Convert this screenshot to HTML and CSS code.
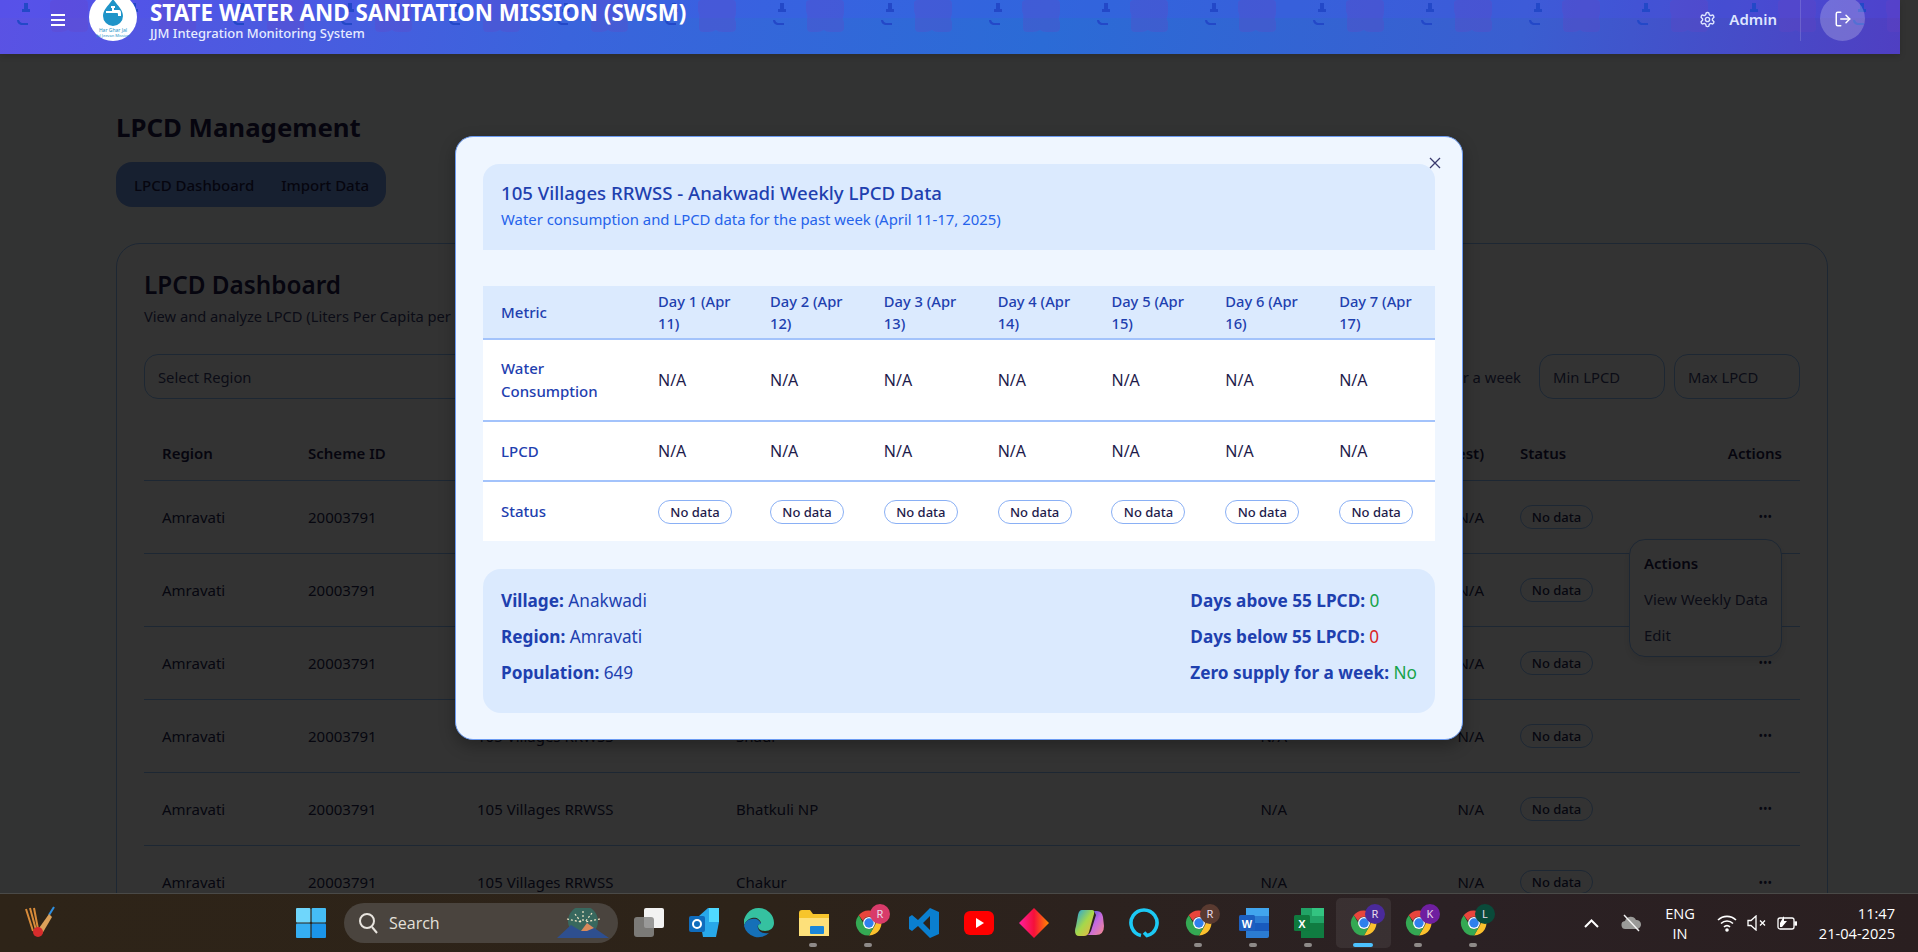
FILE: index.html
```html
<!DOCTYPE html>
<html lang="en">
<head>
    <meta charset="UTF-8">
    <meta name="viewport" content="width=device-width, initial-scale=1.0">
    <title>LPCD Management</title>
    <link rel="stylesheet" href="styles.css">
</head>
<body>
    <svg class="iconDefs" width="0" height="0">
        <symbol id="chrome" viewBox="0 0 48 48">
            <path d="M24 4a20 20 0 0 1 17.3 10H24a10 10 0 0 0-9.4 6.6L7.6 11.5A20 20 0 0 1 24 4z" fill="#e8453c"/>
            <path d="M41.3 14A20 20 0 0 1 24 44l8.6-15A10 10 0 0 0 32 16.5z" fill="#fbc02d"/>
            <path d="M24 44A20 20 0 0 1 7.6 11.5L16 26a10 10 0 0 0 11 7.6l5.6-4.6z" fill="#34a853"/>
            <circle cx="24" cy="24" r="9.5" fill="#fff"/>
            <circle cx="24" cy="24" r="7.5" fill="#2f80ed"/>
        </symbol>
    </svg>

    <div class="viewport">
        <div class="page">
            <header class="topbar">
                <svg class="topbarPattern" width="100%" height="54">
                    <defs>
                        <pattern id="tile" width="108" height="54" patternUnits="userSpaceOnUse">
                            <path d="M54 0h31q3 0 3 4v8q0 3-1 5t1 5v6q0 4-5 4h-9q-4 0-6-2-3 2-7 2h-6q-4 0-4-4v-9q1-3 0-5t-1-5V3q0-3 4-3z" fill="#6a3fc0" fill-opacity=".25"/>
                            <path d="M24 3h4v6h2v3h-8V9h2z" fill="#2348c8"/>
                            <path d="M19 20q1 3 3 3h6v2h-7q-4-1-4-5z" fill="#2348c8"/>
                        </pattern>
                    </defs>
                    <rect width="100%" height="54" fill="url(#tile)"/>
                </svg>
                <button class="menuBtn" aria-label="Menu">
                    <span></span><span></span><span></span>
                </button>
                <div class="logo">
                    <svg width="30" height="28" viewBox="0 0 30 28">
                        <path d="M15 0c5 7 10 11 10 17a10 10 0 0 1-20 0C5 11 10 7 15 0z" fill="#1f94c8"/>
                        <path d="M13 7h4v2h-1v2h5q2 0 2 3v3h-3v-2q0-1-1-1H8v-2h6V9h-1z" fill="#fff"/>
                    </svg>
                    <span class="logoText">Har Ghar Jal</span>
                    <span class="logoText small">Jal Jeevan Mission</span>
                </div>
                <div class="brand">
                    <div class="brandTitle">STATE WATER AND SANITATION MISSION (SWSM)</div>
                    <div class="brandSub">JJM Integration Monitoring System</div>
                </div>
                <div class="userBox">
                    <svg width="17" height="17" viewBox="0 0 24 24" fill="none" stroke="currentColor" stroke-width="2" stroke-linecap="round" stroke-linejoin="round">
                        <path d="M12.22 2h-.44a2 2 0 0 0-2 2v.18a2 2 0 0 1-1 1.73l-.43.25a2 2 0 0 1-2 0l-.15-.08a2 2 0 0 0-2.73.73l-.22.38a2 2 0 0 0 .73 2.73l.15.1a2 2 0 0 1 1 1.72v.51a2 2 0 0 1-1 1.74l-.15.09a2 2 0 0 0-.73 2.73l.22.38a2 2 0 0 0 2.73.73l.15-.08a2 2 0 0 1 2 0l.43.25a2 2 0 0 1 1 1.73V20a2 2 0 0 0 2 2h.44a2 2 0 0 0 2-2v-.18a2 2 0 0 1 1-1.73l.43-.25a2 2 0 0 1 2 0l.15.08a2 2 0 0 0 2.73-.73l.22-.39a2 2 0 0 0-.73-2.73l-.15-.08a2 2 0 0 1-1-1.74v-.5a2 2 0 0 1 1-1.74l.15-.09a2 2 0 0 0 .73-2.73l-.22-.38a2 2 0 0 0-2.73-.73l-.15.08a2 2 0 0 1-2 0l-.43-.25a2 2 0 0 1-1-1.73V4a2 2 0 0 0-2-2z"/>
                        <circle cx="12" cy="12" r="3"/>
                    </svg>
                    <span class="userName">Admin</span>
                </div>
                <div class="logoutWrap">
                    <button class="logoutBtn" aria-label="Logout">
                        <svg width="18" height="18" viewBox="0 0 24 24" fill="none" stroke="currentColor" stroke-width="2" stroke-linecap="round" stroke-linejoin="round">
                            <path d="M9 21H5a2 2 0 0 1-2-2V5a2 2 0 0 1 2-2h4"/>
                            <path d="M16 17l5-5-5-5"/>
                            <path d="M21 12H9"/>
                        </svg>
                    </button>
                </div>
            </header>

            <main class="mainContent">
                <h1 class="pageTitle">LPCD Management</h1>
                <div class="tabs">
                    <span class="tab">LPCD Dashboard</span>
                    <span class="tab">Import Data</span>
                </div>

                <section class="card">
                    <h2 class="cardTitle">LPCD Dashboard</h2>
                    <p class="cardSub">View and analyze LPCD (Liters Per Capita per Day) data across regions and schemes</p>

                    <div class="filters">
                        <div class="filterBox grow">Select Region</div>
                        <div class="filterCheck">Zero supply for a week</div>
                        <div class="filterBox small">Min LPCD</div>
                        <div class="filterBox small">Max LPCD</div>
                    </div>

                    <table class="dataTable">
                        <thead>
                            <tr>
                                <th class="colRegion">Region</th>
                                <th class="colScheme">Scheme ID</th>
                                <th class="colName">Scheme Name</th>
                                <th class="colVillage">Village</th>
                                <th class="colWater numeric">Water</th>
                                <th class="colLpcd numeric">LPCD (Latest)</th>
                                <th class="colStatus">Status</th>
                                <th class="colActions">Actions</th>
                            </tr>
                        </thead>
                        <tbody>
                            <tr><td>Amravati</td><td>20003791</td><td>105 Villages RRWSS</td><td>Anakwadi</td><td class="numeric">N/A</td><td class="numeric">N/A</td><td><span class="pill">No data</span></td><td class="dots">•••</td></tr>
                            <tr><td>Amravati</td><td>20003791</td><td>105 Villages RRWSS</td><td>Anjangaon Bari</td><td class="numeric">N/A</td><td class="numeric">N/A</td><td><span class="pill">No data</span></td><td class="dots">•••</td></tr>
                            <tr><td>Amravati</td><td>20003791</td><td>105 Villages RRWSS</td><td>Babhali</td><td class="numeric">N/A</td><td class="numeric">N/A</td><td><span class="pill">No data</span></td><td class="dots">•••</td></tr>
                            <tr><td>Amravati</td><td>20003791</td><td>105 Villages RRWSS</td><td>Shaur</td><td class="numeric">N/A</td><td class="numeric">N/A</td><td><span class="pill">No data</span></td><td class="dots">•••</td></tr>
                            <tr><td>Amravati</td><td>20003791</td><td>105 Villages RRWSS</td><td>Bhatkuli NP</td><td class="numeric">N/A</td><td class="numeric">N/A</td><td><span class="pill">No data</span></td><td class="dots">•••</td></tr>
                            <tr><td>Amravati</td><td>20003791</td><td>105 Villages RRWSS</td><td>Chakur</td><td class="numeric">N/A</td><td class="numeric">N/A</td><td><span class="pill">No data</span></td><td class="dots">•••</td></tr>
                        </tbody>
                    </table>

                    <div class="actionMenu">
                        <div class="actionHead">Actions</div>
                        <div class="actionItem">View Weekly Data</div>
                        <div class="actionItem">Edit</div>
                    </div>
                </section>
            </main>
        </div>
        <div class="scrollTrack"></div>

        <div class="overlay">
            <div class="modal">
                <button class="closeBtn" aria-label="Close">
                    <svg width="12" height="12" viewBox="0 0 12 12" fill="none" stroke="currentColor" stroke-width="1.3">
                        <path d="M1 1l10 10M11 1L1 11"/>
                    </svg>
                </button>
                <div class="modalHead">
                    <h3>105 Villages RRWSS - Anakwadi Weekly LPCD Data</h3>
                    <p>Water consumption and LPCD data for the past week (April 11-17, 2025)</p>
                </div>

                <table class="weekTable">
                    <thead>
                        <tr>
                            <th class="metric">Metric</th>
                            <th class="dayFirst">Day 1 (Apr 11)</th>
                            <th>Day 2 (Apr 12)</th>
                            <th>Day 3 (Apr 13)</th>
                            <th>Day 4 (Apr 14)</th>
                            <th>Day 5 (Apr 15)</th>
                            <th>Day 6 (Apr 16)</th>
                            <th>Day 7 (Apr 17)</th>
                        </tr>
                    </thead>
                    <tbody>
                        <tr class="rowWater">
                            <td class="metric">Water Consumption</td>
                            <td>N/A</td><td>N/A</td><td>N/A</td><td>N/A</td><td>N/A</td><td>N/A</td><td>N/A</td>
                        </tr>
                        <tr class="rowLpcd">
                            <td class="metric">LPCD</td>
                            <td>N/A</td><td>N/A</td><td>N/A</td><td>N/A</td><td>N/A</td><td>N/A</td><td>N/A</td>
                        </tr>
                        <tr class="rowStatus">
                            <td class="metric">Status</td>
                            <td><span class="badge">No data</span></td>
                            <td><span class="badge">No data</span></td>
                            <td><span class="badge">No data</span></td>
                            <td><span class="badge">No data</span></td>
                            <td><span class="badge">No data</span></td>
                            <td><span class="badge">No data</span></td>
                            <td><span class="badge">No data</span></td>
                        </tr>
                    </tbody>
                </table>

                <div class="summary">
                    <div class="summaryCol">
                        <div><b>Village:</b> Anakwadi</div>
                        <div><b>Region:</b> Amravati</div>
                        <div><b>Population:</b> 649</div>
                    </div>
                    <div class="summaryCol">
                        <div><b>Days above 55 LPCD:</b> <span class="good">0</span></div>
                        <div><b>Days below 55 LPCD:</b> <span class="bad">0</span></div>
                        <div><b>Zero supply for a week:</b> <span class="good">No</span></div>
                    </div>
                </div>
            </div>
        </div>
    </div>

    <footer class="taskbar">
        <svg class="cricket" width="32" height="34" viewBox="0 0 32 34" fill="none">
            <path d="M2 3l7 22M6 2l6 22M10 2l4 21" stroke="#d88b3a" stroke-width="2"/>
            <path d="M30 1l-5 8" stroke="#2f8fe0" stroke-width="2"/>
            <path d="M25 8l3 3-10 17-5-3z" fill="#dca15a"/>
            <circle cx="14" cy="26" r="5" fill="#d62c2c"/>
        </svg>

        <svg class="winLogo" width="30" height="30" viewBox="0 0 30 30">
            <rect x="0" y="0" width="14.4" height="14.4" rx="1" fill="#6fd6fb"/>
            <rect x="15.6" y="0" width="14.4" height="14.4" rx="1" fill="#45bdf5"/>
            <rect x="0" y="15.6" width="14.4" height="14.4" rx="1" fill="#35aef2"/>
            <rect x="15.6" y="15.6" width="14.4" height="14.4" rx="1" fill="#1b95ea"/>
        </svg>

        <div class="searchBox">
            <svg width="20" height="22" viewBox="0 0 20 22" fill="none" stroke="#e8e4de" stroke-width="2">
                <circle cx="9" cy="9" r="7"/>
                <path d="M14 15l5 6"/>
            </svg>
            <span>Search</span>
            <svg class="searchArt" width="52" height="30" viewBox="0 0 52 30">
                <circle cx="26" cy="13" r="15" fill="#38685e"/>
                <path d="M26 3v10M18 6l6 8M35 5l-7 9M10 11l14 3M43 11l-15 3" stroke="#f4e8c8" stroke-width="1.2" stroke-dasharray="2 2"/>
                <path d="M0 30l14-13 10 6 6-8 22 15z" fill="#2e4f8f"/>
                <path d="M24 23l6-8 7 5-7 3z" fill="#d98a5a"/>
            </svg>
        </div>

        <div class="appList">
            <div class="app">
                <svg width="30" height="30" viewBox="0 0 30 30">
                    <rect x="10" y="0" width="20" height="20" rx="2" fill="#f2f2f2"/>
                    <rect x="0" y="9" width="20" height="20" rx="3" fill="#8a8a88" fill-opacity=".85"/>
                </svg>
            </div>
            <div class="app">
                <svg width="30" height="30" viewBox="0 0 30 30">
                    <path d="M10 8l9-8h11v14l-3 15H14z" fill="#28a8ea"/>
                    <path d="M20 0h10v14H20z" fill="#50d9ff"/>
                    <rect x="0" y="8" width="16" height="16" rx="2" fill="#0f6cbd"/>
                    <circle cx="8" cy="16" r="4" fill="none" stroke="#fff" stroke-width="2"/>
                </svg>
            </div>
            <div class="app">
                <svg width="30" height="30" viewBox="0 0 30 30">
                    <path d="M15 0a15 15 0 0 1 15 15c0 5-4 8-9 8-4 0-7-2-7-5 0-2 2-3 3-3-1-4-5-6-9-5C4 11 1 14 0 18A15 15 0 0 1 15 0z" fill="#35c1a0"/>
                    <path d="M0 18c1-4 4-7 8-7 4-1 8 1 9 5-2 0-4 1-3 4 1 5 7 6 11 5a15 15 0 0 1-25-7z" fill="#1570b8"/>
                </svg>
            </div>
            <div class="app hasDot">
                <svg width="30" height="26" viewBox="0 0 30 26">
                    <path d="M0 3q0-3 3-3h8l3 4h16v22H0z" fill="#f7c52c"/>
                    <path d="M0 8h30v18H0z" fill="#fde07a"/>
                    <rect x="11" y="16" width="14" height="8" rx="1" fill="#1a86d9"/>
                </svg>
            </div>
            <div class="app hasDot">
                <svg width="30" height="30"><use href="#chrome"/></svg>
                <span class="profile rose">R</span>
            </div>
            <div class="app">
                <svg width="30" height="30" viewBox="0 0 30 30">
                    <path d="M21 0l9 4v22l-9 4L9 18l-6 5-3-2v-12l3-2 6 5zM21 8l-7 7 7 7z" fill="#0a7fd0"/>
                </svg>
            </div>
            <div class="app">
                <svg width="30" height="24" viewBox="0 0 30 24">
                    <rect width="30" height="24" rx="6" fill="#f00"/>
                    <path d="M12 7l8 5-8 5z" fill="#fff"/>
                </svg>
            </div>
            <div class="app">
                <svg width="30" height="30" viewBox="0 0 30 30">
                    <defs>
                        <linearGradient id="kite" x1="0" x2="1">
                            <stop offset="0" stop-color="#ff1f9f"/>
                            <stop offset=".5" stop-color="#f5103a"/>
                            <stop offset="1" stop-color="#ff8a00"/>
                        </linearGradient>
                    </defs>
                    <path d="M15 0l15 15-15 15L0 15z" fill="url(#kite)"/>
                </svg>
            </div>
            <div class="app">
                <svg width="30" height="30" viewBox="0 0 30 30">
                    <defs>
                        <linearGradient id="copilotA" x1="0" y1="0" x2="1" y2="1">
                            <stop offset="0" stop-color="#1aa0e8"/>
                            <stop offset=".5" stop-color="#a6d84a"/>
                            <stop offset="1" stop-color="#f5b042"/>
                        </linearGradient>
                        <linearGradient id="copilotB" x1="0" y1="0" x2="1" y2="1">
                            <stop offset="0" stop-color="#2b50d8"/>
                            <stop offset=".5" stop-color="#c46ae0"/>
                            <stop offset="1" stop-color="#f58a8a"/>
                        </linearGradient>
                    </defs>
                    <path d="M8 2h10q3 0 2 4l-5 18q-1 4-5 4H5q-4 0-4-5q0-2 1-5l2-11q1-5 4-5z" fill="url(#copilotA)"/>
                    <path d="M20 3h3q5 0 6 6l1 9q0 9-8 9h-9q3-1 4-4l5-16z" fill="url(#copilotB)"/>
                </svg>
            </div>
            <div class="app">
                <svg width="30" height="30" viewBox="0 0 30 30" fill="none">
                    <path d="M12 27.600a13 13 0 1 1 6 0l-3-3" stroke="#1cc9f5" stroke-width="3.600"/>
                </svg>
            </div>
            <div class="app hasDot">
                <svg width="30" height="30"><use href="#chrome"/></svg>
                <span class="profile brown">R</span>
            </div>
            <div class="app hasDot">
                <svg width="30" height="30" viewBox="0 0 30 30">
                    <path d="M7 0h21q2 0 2 2v26q0 2-2 2H7z" fill="#2b7cd3"/>
                    <path d="M7 0h23v8H7z" fill="#41a5ee"/>
                    <path d="M7 15h23v8H7z" fill="#185abd"/>
                    <rect x="0" y="7" width="16" height="16" rx="1.5" fill="#1c5fc0"/>
                    <text class="officeLetter" x="8" y="20">W</text>
                </svg>
            </div>
            <div class="app hasDot">
                <svg width="30" height="30" viewBox="0 0 30 30">
                    <path d="M7 0h21q2 0 2 2v26q0 2-2 2H7z" fill="#21a366"/>
                    <path d="M18 0h12v8H18z" fill="#33c481"/>
                    <path d="M7 15h23v15H7z" fill="#107c41"/>
                    <rect x="0" y="7" width="16" height="16" rx="1.5" fill="#0f7a3e"/>
                    <text class="officeLetter" x="8" y="20">X</text>
                </svg>
            </div>
            <div class="app active hasDot">
                <svg width="30" height="30"><use href="#chrome"/></svg>
                <span class="profile violet">R</span>
            </div>
            <div class="app hasDot">
                <svg width="30" height="30"><use href="#chrome"/></svg>
                <span class="profile purple">K</span>
            </div>
            <div class="app hasDot">
                <svg width="30" height="30"><use href="#chrome"/></svg>
                <span class="profile green">L</span>
            </div>
        </div>

        <div class="tray">
            <svg class="trayChevron" width="15" height="9" viewBox="0 0 15 9" fill="none" stroke="#fff" stroke-width="2">
                <path d="M1 8l6.500-6.500L14 8"/>
            </svg>
            <svg class="trayCloud" width="21" height="18" viewBox="0 0 21 18">
                <path d="M5 15a4 4 0 0 1-1-8 6 6 0 0 1 11-1 4.500 4.500 0 0 1 1 9z" fill="#9a9a98"/>
                <path d="M3 1l15 16" stroke="#f2f2f2" stroke-width="1.4"/>
            </svg>
            <div class="trayLang">ENG<br>IN</div>
            <svg class="trayIcon" width="20" height="18" viewBox="0 0 20 18" fill="none" stroke="#fff" stroke-width="1.600">
                <path d="M1 6a13 13 0 0 1 18 0M4 9.500a8.500 8.500 0 0 1 12 0M7 13a4 4 0 0 1 6 0"/>
                <circle cx="10" cy="16" r="1" fill="#fff"/>
            </svg>
            <svg class="trayIcon" width="20" height="16" viewBox="0 0 20 16" fill="none" stroke="#fff" stroke-width="1.300">
                <path d="M1 5.500h3L9 1v14l-5-4.500H1z"/>
                <path d="M13 5.500l5 5M18 5.500l-5 5"/>
            </svg>
            <svg class="trayIcon" width="20" height="16" viewBox="0 0 20 16" fill="none" stroke="#fff" stroke-width="1.300">
                <rect x="1" y="3" width="16" height="11" rx="2"/>
                <rect x="18" y="7" width="1.500" height="3" fill="#fff"/>
                <path d="M3 12V8l4-7v5h3l-5 6z" fill="#fff" stroke="none"/>
            </svg>
            <div class="trayClock">11:47<br>21-04-2025</div>
        </div>
    </footer>
</body>
</html>
```

FILE: styles.css
```css
* {
    box-sizing: border-box;
}
body {
    margin: 0;
    height: 952px;
    display: flex;
    flex-direction: column;
    overflow: hidden;
    font-family: "Noto Sans", "Open Sans", Arial, sans-serif;
    font-size: 15px;
    color: #1e1b4b;
    background: #fff;
}
.iconDefs {
    position: absolute;
}
.viewport {
    flex: 1;
    min-height: 0;
    display: flex;
    position: relative;
    overflow: hidden;
}
.page {
    flex: 1;
    min-width: 0;
    background: #fbfcff;
}
.scrollTrack {
    width: 18px;
    background: #f8f8f8;
}

/* header */
.topbar {
    position: relative;
    z-index: 60;
    height: 54px;
    display: flex;
    align-items: flex-start;
    padding-left: 51px;
    color: #fff;
    background: linear-gradient(100deg, #5a52e4 0%, #3a64dc 30%, #2b6bd6 55%, #3a5ed0 80%, #4f3fc2 100%);
    box-shadow: 0 2px 6px rgba(0, 0, 0, 0.15);
}
.topbarPattern {
    position: absolute;
    left: 0;
    top: 0;
}
.topbar::before {
    content: "";
    position: absolute;
    left: 0;
    right: 0;
    top: 0;
    height: 18px;
    background: rgba(80, 80, 255, 0.18);
}
.menuBtn {
    position: relative;
    width: 14px;
    padding: 0;
    margin-top: 14px;
    border: none;
    background: none;
    display: flex;
    flex-direction: column;
    gap: 3px;
}
.menuBtn span {
    display: block;
    height: 2px;
    background: #fff;
}
.logo {
    position: relative;
    width: 48px;
    height: 48px;
    margin: -7px 0 0 24px;
    border-radius: 50%;
    background: #fff;
    display: flex;
    flex-direction: column;
    align-items: center;
}
.logo svg {
    margin-top: 6px;
    flex: none;
}
.logoText {
    font-size: 5px;
    line-height: 6px;
    color: #1f94c8;
    white-space: nowrap;
}
.logoText.small {
    font-size: 4px;
    line-height: 5px;
}
.brand {
    position: relative;
    margin-left: 13px;
}
.brandTitle {
    font-size: 22.4px;
    line-height: 26px;
    font-weight: 700;
}
.brandSub {
    font-size: 13px;
    line-height: 14px;
    font-weight: 500;
    color: #e6ebff;
}
.userBox {
    position: relative;
    margin: 9px 0 0 auto;
    display: flex;
    align-items: center;
    gap: 13px;
    color: #dfe6ff;
}
.userName {
    font-size: 15px;
    font-weight: 600;
}
.logoutWrap {
    position: relative;
    width: 65px;
    margin-left: 23px;
    height: 41px;
    padding-left: 19px;
    border-left: 1px solid rgba(255, 255, 255, 0.15);
    margin-right: 35px;
}
.logoutBtn {
    width: 45px;
    height: 45px;
    margin-top: -4px;
    border: none;
    padding: 0;
    border-radius: 50%;
    color: #fff;
    background: rgba(255, 255, 255, 0.22);
    display: flex;
    align-items: center;
    justify-content: center;
}

/* page behind the dialog */
.mainContent {
    padding: 57px 72px 0 116px;
}
.pageTitle {
    margin: 0;
    font-size: 25.8px;
    line-height: 33px;
    font-weight: 700;
}
.tabs {
    display: inline-flex;
    align-items: center;
    gap: 27px;
    height: 45px;
    margin-top: 18px;
    padding: 0 17px 0 18px;
    border-radius: 16px;
    background: #73a0f0;
    font-weight: 500;
}
.card {
    position: relative;
    margin-top: 36px;
    height: 760px;
    padding: 24px 27px;
    background: #fff;
    border: 1px solid #8fc0ff;
    border-radius: 24px;
}
.cardTitle {
    margin: 0;
    font-size: 24.3px;
    line-height: 34px;
    font-weight: 600;
}
.cardSub {
    margin: 4px 0 0;
    font-size: 14.7px;
    line-height: 20px;
    color: #3b3f70;
}
.filters {
    display: flex;
    align-items: center;
    gap: 9px;
    margin-top: 28px;
}
.filterBox {
    height: 45px;
    padding: 0 13px;
    border: 1px solid #8fc0ff;
    border-radius: 14px;
    display: flex;
    align-items: center;
    font-size: 14.8px;
    color: #3b3f70;
}
.filterBox.grow {
    flex: 1;
}
.filterBox.small {
    width: 126px;
}
.filterCheck {
    margin-right: 9px;
    font-size: 14.8px;
    color: #3b3f70;
}
.dataTable {
    width: 100%;
    margin-top: 18px;
    border-collapse: collapse;
    table-layout: fixed;
}
.dataTable th {
    height: 63px;
    padding: 10px 18px 0;
    text-align: left;
    font-weight: 600;
    white-space: nowrap;
    border-bottom: 1px solid #8fc0ff;
}
.dataTable td {
    height: 73.1px;
    padding: 0 18px;
    border-bottom: 1px solid #8fc0ff;
    color: #232650;
}
.colRegion { width: 146px; }
.colScheme { width: 169px; }
.colName { width: 259px; }
.colVillage { width: 382px; }
.colWater { width: 205px; }
.colLpcd { width: 197px; }
.colStatus { width: 165px; }
.dataTable .numeric {
    text-align: right;
}
.dataTable .colActions,
.dataTable .dots {
    text-align: right;
}
.dataTable .dots {
    font-size: 12px;
    padding-right: 28px;
}
.pill {
    display: inline-block;
    width: 73px;
    line-height: 22px;
    border: 1px solid #8fc0ff;
    border-radius: 12px;
    font-size: 13px;
    font-weight: 500;
    text-align: center;
}
.actionMenu {
    position: absolute;
    top: 295px;
    right: 45px;
    width: 153px;
    height: 118px;
    padding: 5px 14px;
    background: #fff;
    border: 1px solid #8fc0ff;
    border-radius: 16px;
    box-shadow: 0 4px 10px rgba(0, 0, 0, 0.1);
}
.actionHead,
.actionItem {
    line-height: 36px;
    white-space: nowrap;
    color: #3b3f70;
}
.actionHead {
    font-weight: 600;
    color: #1e1b4b;
}

/* dialog */
.overlay {
    position: absolute;
    inset: 0;
    z-index: 50;
    padding-top: 136px;
    display: flex;
    justify-content: center;
    align-items: flex-start;
    background: rgba(0, 0, 0, 0.8);
}
.modal {
    position: relative;
    width: 1008px;
    height: 604px;
    padding: 27px 27px 0;
    background: #eff6ff;
    border: 1px solid #6b9bf2;
    border-radius: 18px;
    box-shadow: 0 6px 16px rgba(0, 0, 0, 0.3);
}
.closeBtn {
    position: absolute;
    top: 20px;
    right: 21px;
    width: 12px;
    height: 12px;
    padding: 0;
    border: none;
    background: none;
    color: #3a3a6e;
    display: flex;
}
.modalHead {
    height: 86px;
    padding: 16px 18px 0;
    border-radius: 16px 16px 0 0;
    background: #dbeafe;
}
.modalHead h3 {
    margin: 0;
    font-size: 18.6px;
    line-height: 26px;
    font-weight: 500;
    color: #1e40af;
}
.modalHead p {
    margin: 3px 0 0;
    font-size: 14.9px;
    line-height: 20px;
    color: #2563eb;
}
.weekTable {
    width: 100%;
    margin-top: 36px;
    border-collapse: collapse;
    table-layout: fixed;
    background: #fff;
}
.weekTable th {
    height: 53px;
    padding: 0 18px;
    text-align: left;
    font-size: 14.7px;
    font-weight: 500;
    line-height: 22px;
    color: #1e40af;
    background: #dbeafe;
    border-bottom: 2px solid #a3c3fb;
}
.weekTable td {
    padding: 0 18px;
    font-size: 16px;
    line-height: 23px;
    color: #1e1b4b;
}
.weekTable .metric {
    width: 157px;
    font-size: 15px;
    font-weight: 500;
    color: #1e40af;
}
.weekTable .dayFirst {
    width: 112px;
}
.rowWater td {
    height: 82px;
    border-bottom: 2px solid #a3c3fb;
}
.rowLpcd td {
    height: 60px;
    border-bottom: 2px solid #a3c3fb;
}
.rowStatus td {
    height: 60px;
}
.badge {
    display: block;
    width: 74px;
    height: 24px;
    line-height: 22px;
    background: #fff;
    border: 1px solid #8ab0f5;
    border-radius: 12px;
    font-size: 13px;
    font-weight: 500;
    text-align: center;
}
.summary {
    height: 144px;
    margin-top: 28px;
    padding: 14px 18px;
    border-radius: 18px;
    background: #dbeafe;
    display: flex;
    justify-content: space-between;
    color: #1e40af;
    font-size: 17.2px;
}
.summaryCol div {
    line-height: 36px;
}
.summary b {
    font-weight: 700;
}
.good {
    color: #16a34a;
}
.bad {
    color: #dc2626;
}

/* windows taskbar */
.taskbar {
    height: 59px;
    flex: none;
    display: flex;
    align-items: center;
    padding-left: 24px;
    color: #fff;
    border-top: 1px solid #4a4a48;
    background: linear-gradient(90deg, #2e2418 0%, #2d2319 40%, #2b2124 75%, #2a1f20 100%);
}
.winLogo {
    margin-left: 240px;
}
.searchBox {
    width: 274px;
    height: 40px;
    margin-left: 18px;
    padding-left: 14px;
    border-radius: 20px;
    background: #4a443e;
    display: flex;
    align-items: center;
    gap: 11px;
    font-family: "Open Sans", sans-serif;
    font-size: 16px;
    color: #e4e0da;
}
.searchArt {
    margin-left: auto;
    margin-right: 9px;
}
.appList {
    display: flex;
    margin-left: 3px;
}
.app {
    position: relative;
    width: 55px;
    height: 50px;
    display: flex;
    align-items: center;
    justify-content: center;
    border-radius: 5px;
}
.hasDot::after {
    content: "";
    position: absolute;
    bottom: 1px;
    left: 23px;
    width: 8px;
    height: 4px;
    border-radius: 2px;
    background: #8e8a88;
}
.active {
    background: rgba(255, 255, 255, 0.07);
}
.active::after {
    left: 17px;
    width: 20px;
    background: #4cc2ff;
}
.profile {
    position: absolute;
    top: 6px;
    right: 6px;
    width: 20px;
    height: 20px;
    border-radius: 50%;
    font-size: 11px;
    line-height: 20px;
    text-align: center;
    color: #e8dcec;
}
.rose { background: #d83b6a; }
.brown { background: #5a3a30; }
.violet { background: #4a2a9a; }
.purple { background: #6f1fa0; }
.green { background: #0a4a3a; }
.officeLetter {
    font-family: "Liberation Sans", Arial, sans-serif;
    font-size: 11px;
    font-weight: 700;
    text-anchor: middle;
    fill: #fff;
}
.tray {
    margin-left: auto;
    padding-right: 23px;
    display: flex;
    align-items: center;
    font-family: "Open Sans", sans-serif;
    font-size: 14.6px;
    line-height: 20px;
}
.trayCloud {
    margin-left: 22px;
}
.trayLang {
    width: 38px;
    margin: 0 18px 0 19px;
    text-align: center;
}
.trayIcon {
    margin-right: 10px;
}
.trayClock {
    width: 88px;
    text-align: right;
}
```
